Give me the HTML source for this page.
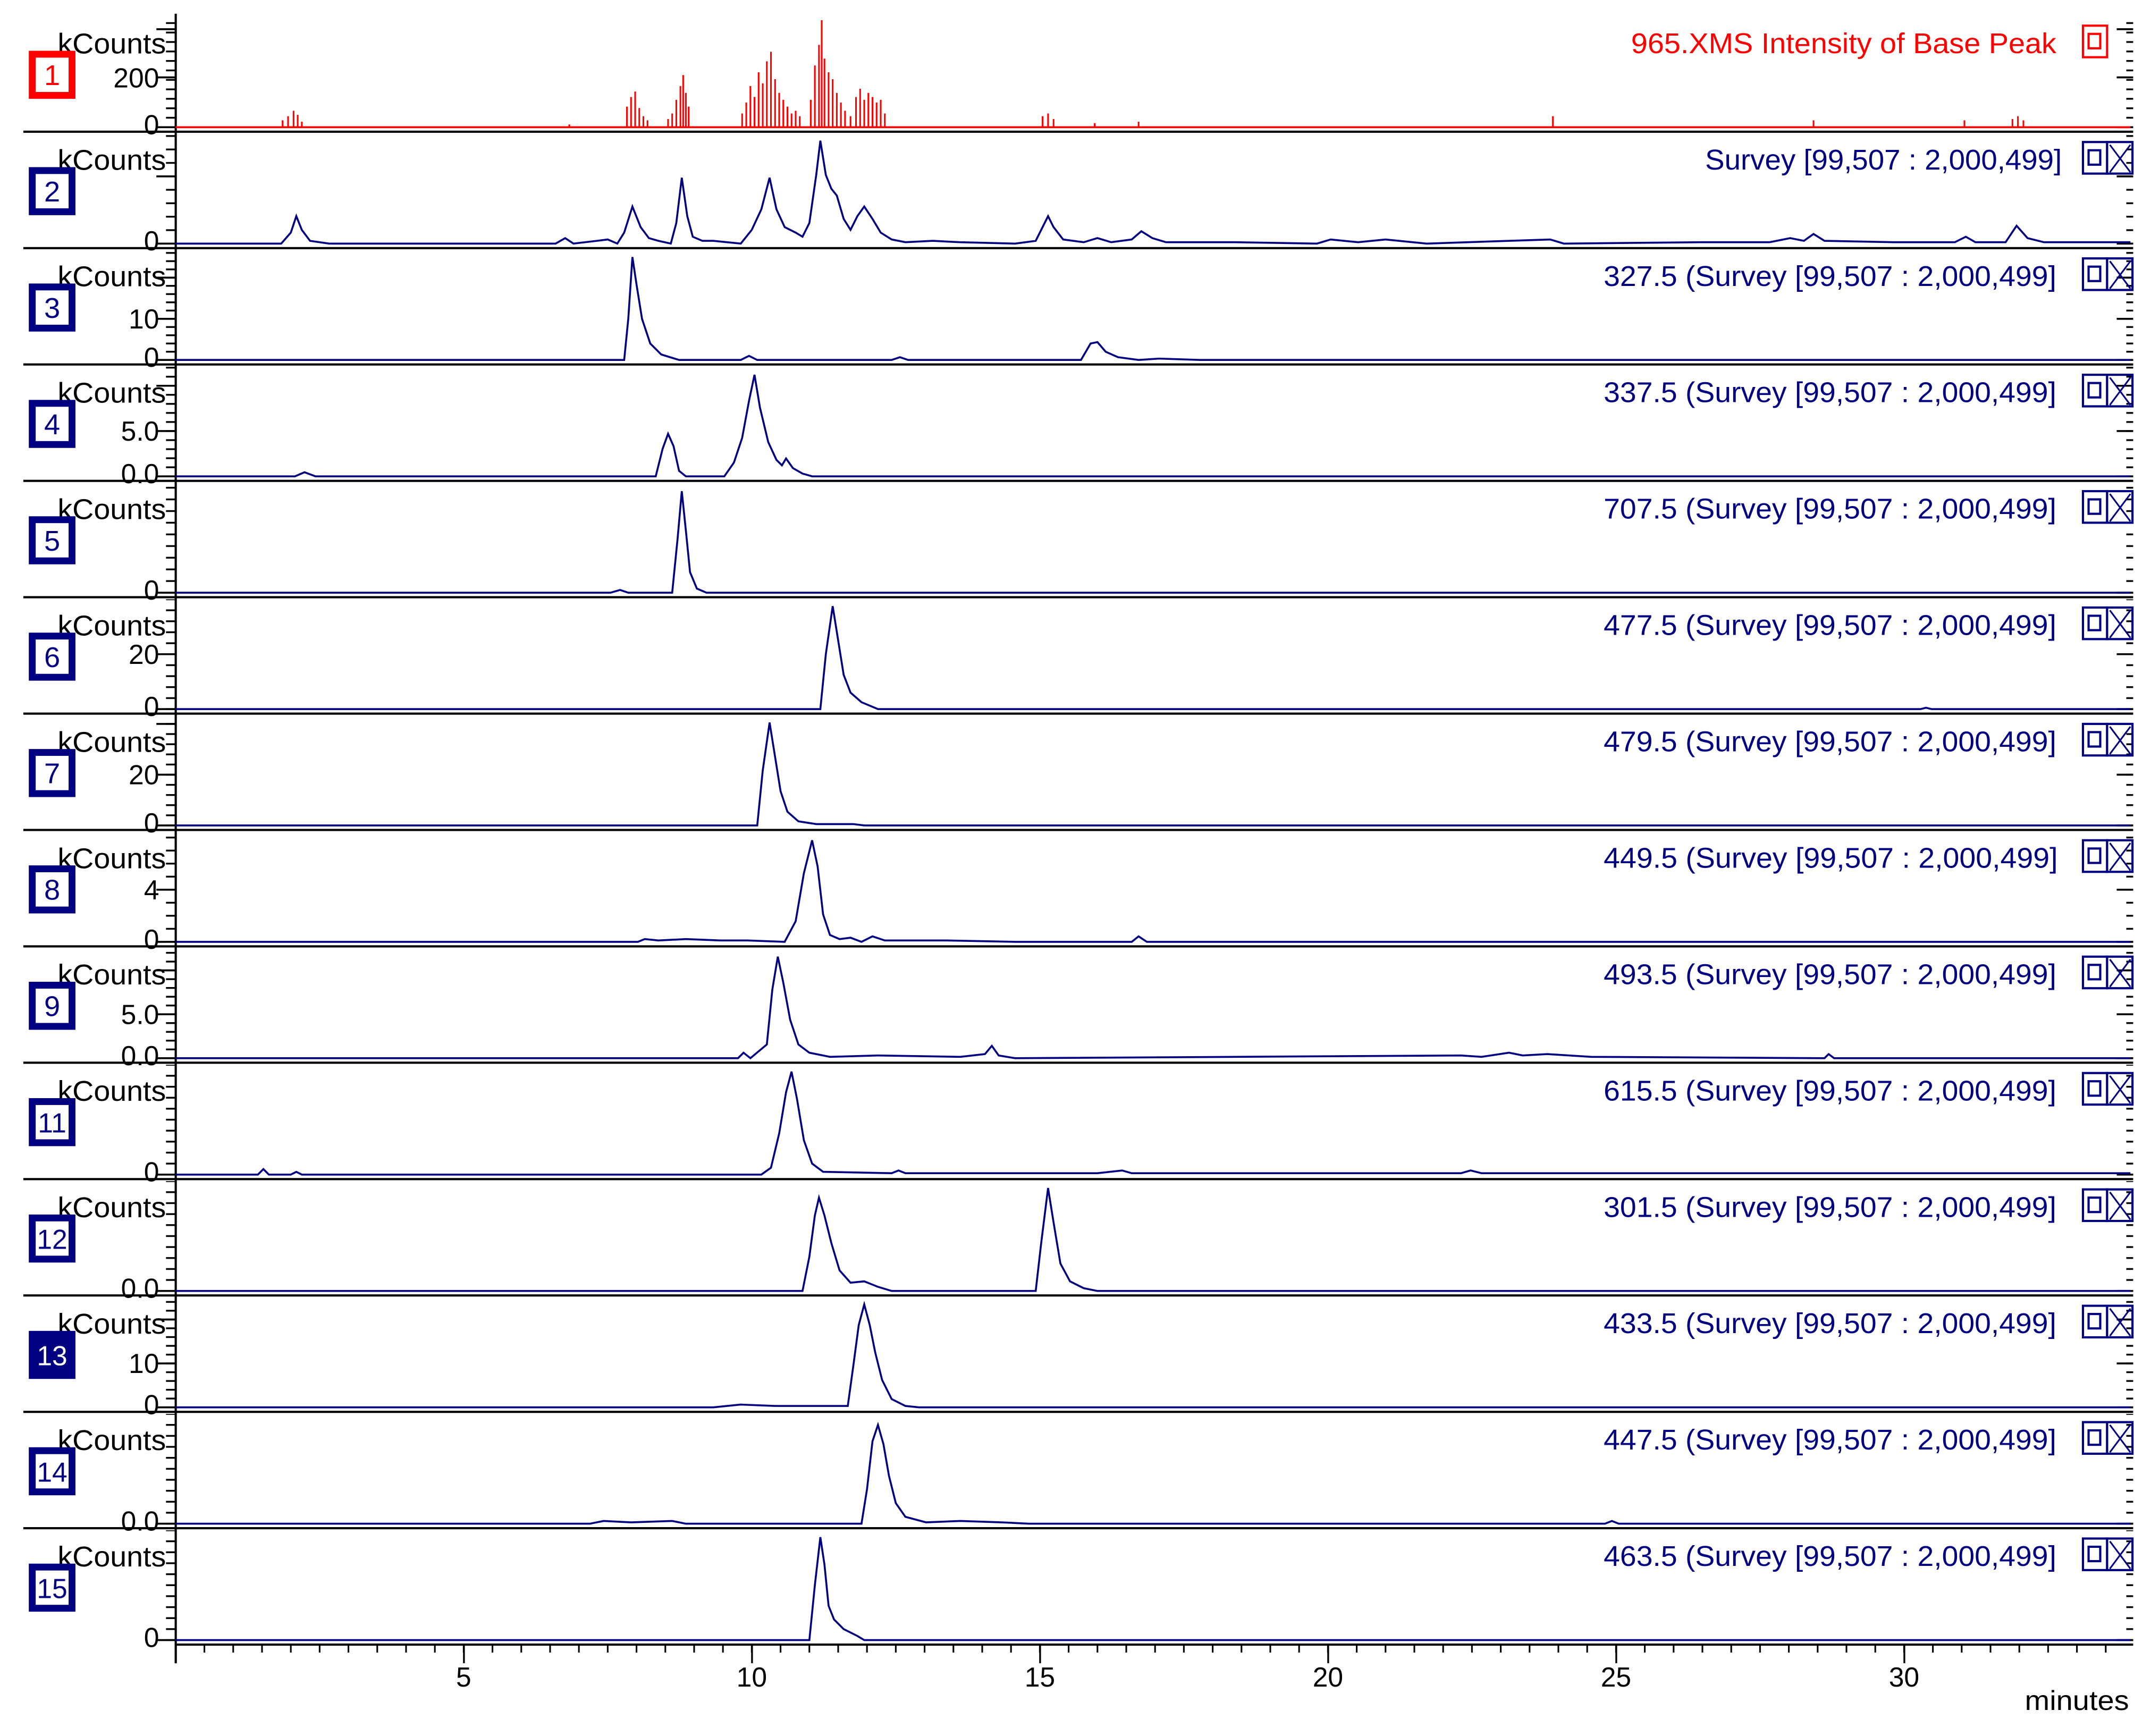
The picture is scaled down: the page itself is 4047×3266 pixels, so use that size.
<!DOCTYPE html>
<html><head><meta charset="utf-8"><style>html,body{margin:0;padding:0;background:#fff}svg{display:block}</style></head><body>
<svg xmlns="http://www.w3.org/2000/svg" width="4047" height="3266" viewBox="0 0 1568 1265" preserveAspectRatio="none" font-family="Liberation Sans, Arial, sans-serif">
<defs>
<pattern id="a" x="0" y="-0.65" width="7" height="6.9" patternUnits="userSpaceOnUse"><rect width="7" height="1.3"/></pattern>
<pattern id="b" x="0" y="-0.65" width="7" height="9.8" patternUnits="userSpaceOnUse"><rect width="7" height="1.3"/></pattern>
<pattern id="c" x="0" y="-0.65" width="7" height="6" patternUnits="userSpaceOnUse"><rect width="7" height="1.3"/></pattern>
<pattern id="d" x="0" y="-0.65" width="7" height="6.6" patternUnits="userSpaceOnUse"><rect width="7" height="1.3"/></pattern>
<pattern id="e" x="0" y="-0.65" width="7" height="8.5" patternUnits="userSpaceOnUse"><rect width="7" height="1.3"/></pattern>
<pattern id="f" x="0" y="-0.65" width="7" height="8" patternUnits="userSpaceOnUse"><rect width="7" height="1.3"/></pattern>
<pattern id="g" x="0" y="-0.65" width="7" height="7.4" patternUnits="userSpaceOnUse"><rect width="7" height="1.3"/></pattern>
<pattern id="h" x="0" y="-0.65" width="7" height="9.5" patternUnits="userSpaceOnUse"><rect width="7" height="1.3"/></pattern>
<pattern id="i" x="0" y="-0.65" width="7" height="6.4" patternUnits="userSpaceOnUse"><rect width="7" height="1.3"/></pattern>
<pattern id="xt" x="127.4" y="0" width="21" height="10" patternUnits="userSpaceOnUse"><rect width="1.2" height="10"/></pattern>
<g id="icon"><rect x="1518.4" y="-74" width="17.6" height="23" fill="none" stroke="#000080" stroke-width="1.6"/><rect x="1522.5" y="-68" width="8.5" height="10.5" fill="none" stroke="#000080" stroke-width="1.6"/><rect x="1536" y="-74" width="18.5" height="23" fill="none" stroke="#000080" stroke-width="1.6"/><path d="M1538 -72 L1553 -52 M1553 -72 L1538 -52" stroke="#000080" stroke-width="1.2"/></g>
</defs>
<rect width="1568" height="1265" fill="#fff"/>
<!-- y axis -->
<rect x="127.3" y="10" width="1.6" height="1202" fill="#000"/>

<!-- Panel 1 -->
<g transform="translate(0,92.7)">
<rect x="121" y="-82" width="7" height="82.65" fill="url(#a)"/><rect x="1550" y="-82" width="5" height="82.65" fill="url(#a)"/>
<path d="M114 0H128M114 -36.3H128M114 -71.4H128M1543 0H1555M1543 -36.3H1555M1543 -71.4H1555" stroke="#000" stroke-width="1.4"/>
<text x="116" y="-29" font-size="20" text-anchor="end">200</text><text x="116" y="5" font-size="20" text-anchor="end">0</text>
<text x="42" y="-53.7" font-size="21" textLength="79" lengthAdjust="spacingAndGlyphs">kCounts</text>
<rect x="23.5" y="-53.2" width="29" height="30" fill="#fff" stroke="#ff0000" stroke-width="5"/><text x="38" y="-30.7" font-size="21" text-anchor="middle" fill="#ff0000">1</text>
<text x="1189" y="-54" font-size="21" fill="#ff0000" textLength="310" lengthAdjust="spacingAndGlyphs">965.XMS Intensity of Base Peak</text>
<rect x="1518.4" y="-74" width="17.6" height="23" fill="none" stroke="#ff0000" stroke-width="1.6"/><rect x="1522.5" y="-68" width="8.5" height="10.5" fill="none" stroke="#ff0000" stroke-width="1.6"/>
<path d="M128 0H1553" stroke="#ff0000" stroke-width="1.4"/>
<path fill="none" stroke="#ff0000" stroke-width="1.2" d="M206 0V-5M210 0V-8M214 0V-12M217 0V-9M220 0V-4M415 0V-2M457 0V-15M460 0V-22M463 0V-26M466 0V-14M469 0V-8M472 0V-5M487 0V-6M490 0V-10M493 0V-20M496 0V-30M498 0V-38M500 0V-25M502 0V-15M541 0V-10M544 0V-18M547 0V-30M550 0V-22M553 0V-40M556 0V-32M559 0V-48M562 0V-55M565 0V-35M568 0V-25M571 0V-20M574 0V-15M577 0V-10M580 0V-12M583 0V-8M591 0V-20M594 0V-45M597 0V-60M599 0V-78M601 0V-50M604 0V-40M607 0V-35M610 0V-25M613 0V-18M616 0V-12M620 0V-8M624 0V-22M627 0V-28M630 0V-20M633 0V-25M636 0V-22M639 0V-18M642 0V-20M645 0V-10M760 0V-8M764 0V-10M768 0V-6M798 0V-3M830 0V-4M1132 0V-8M1322 0V-5M1432 0V-5M1467 0V-6M1471 0V-8M1475 0V-5"/>
<path d="M17 3.3H1555" stroke="#000" stroke-width="1.6"/>
</g>

<!-- Panel 2 -->
<g transform="translate(0,177.5)">
<rect x="121" y="-80" width="7" height="80.65" fill="url(#b)"/><rect x="1550" y="-80" width="5" height="80.65" fill="url(#b)"/>
<path d="M114 0H128M114 -49H128M1543 0H1555M1543 -49H1555" stroke="#000" stroke-width="1.4"/>
<text x="116" y="5" font-size="20" text-anchor="end">0</text>
<text x="42" y="-53.7" font-size="21" textLength="79" lengthAdjust="spacingAndGlyphs">kCounts</text>
<rect x="23.5" y="-53.2" width="29" height="30" fill="#fff" stroke="#000080" stroke-width="5"/><text x="38" y="-30.7" font-size="21" text-anchor="middle" fill="#000080">2</text>
<text x="1243" y="-54" font-size="21" fill="#000080" textLength="260" lengthAdjust="spacingAndGlyphs">Survey [99,507 : 2,000,499]</text>
<use href="#icon"/>
<path fill="none" stroke="#000080" stroke-width="1.4" d="M128,0 L205,0 L212,-8 L216,-20 L220,-10 L226,-2 L240,0 L405,0 L412,-4 L418,0 L435,-2 L443,-3 L450,0 L455,-8 L461,-27 L467,-12 L473,-4 L480,-2 L489,0 L493,-15 L497,-48 L501,-20 L505,-5 L512,-2 L520,-2 L530,-1 L540,0 L548,-10 L555,-25 L561,-48 L566,-25 L572,-12 L580,-8 L585,-5 L590,-15 L595,-50 L598,-75 L602,-50 L606,-40 L610,-35 L615,-18 L620,-10 L625,-20 L630,-27 L636,-18 L642,-8 L650,-3 L660,-1 L680,-2 L700,-1 L740,0 L755,-2 L760,-12 L764,-20 L768,-12 L775,-3 L790,-1 L800,-4 L810,-1 L825,-3 L832,-9 L840,-4 L850,-1 L900,-1 L960,0 L970,-3 L990,-1 L1010,-3 L1040,0 L1130,-3 L1140,0 L1240,-1 L1290,-1 L1305,-4 L1315,-2 L1322,-7 L1330,-2 L1380,-1 L1425,-1 L1433,-5 L1440,-1 L1462,-1 L1470,-13 L1478,-4 L1490,-1 L1553,-1"/>
<path d="M17 3.3H1555" stroke="#000" stroke-width="1.6"/>
</g>

<!-- Panel 3 -->
<g transform="translate(0,262.3)">
<rect x="121" y="-80" width="7" height="80.65" fill="url(#c)"/><rect x="1550" y="-80" width="5" height="80.65" fill="url(#c)"/>
<path d="M114 0H128M114 -30H128M114 -60H128M1543 0H1555M1543 -30H1555M1543 -60H1555" stroke="#000" stroke-width="1.4"/>
<text x="116" y="-23" font-size="20" text-anchor="end">10</text><text x="116" y="5" font-size="20" text-anchor="end">0</text>
<text x="42" y="-53.7" font-size="21" textLength="79" lengthAdjust="spacingAndGlyphs">kCounts</text>
<rect x="23.5" y="-53.2" width="29" height="30" fill="#fff" stroke="#000080" stroke-width="5"/><text x="38" y="-30.7" font-size="21" text-anchor="middle" fill="#000080">3</text>
<text x="1169" y="-54" font-size="21" fill="#000080" textLength="330" lengthAdjust="spacingAndGlyphs">327.5 (Survey [99,507 : 2,000,499]</text>
<use href="#icon"/>
<path fill="none" stroke="#000080" stroke-width="1.4" d="M128,0 L455,0 L458,-30 L461,-75 L464,-55 L468,-30 L474,-12 L482,-4 L495,0 L540,0 L546,-3 L552,0 L650,0 L656,-2 L662,0 L788,0 L795,-12 L800,-13 L806,-6 L815,-2 L830,0 L845,-1 L875,0 L1553,0"/>
<path d="M17 3.3H1555" stroke="#000" stroke-width="1.6"/>
</g>

<!-- Panel 4 -->
<g transform="translate(0,347.1)">
<rect x="121" y="-80" width="7" height="80.65" fill="url(#d)"/><rect x="1550" y="-80" width="5" height="80.65" fill="url(#d)"/>
<path d="M114 0H128M114 -33H128M114 -66H128M1543 0H1555M1543 -33H1555M1543 -66H1555" stroke="#000" stroke-width="1.4"/>
<text x="116" y="-26" font-size="20" text-anchor="end">5.0</text><text x="116" y="5" font-size="20" text-anchor="end">0.0</text>
<text x="42" y="-53.7" font-size="21" textLength="79" lengthAdjust="spacingAndGlyphs">kCounts</text>
<rect x="23.5" y="-53.2" width="29" height="30" fill="#fff" stroke="#000080" stroke-width="5"/><text x="38" y="-30.7" font-size="21" text-anchor="middle" fill="#000080">4</text>
<text x="1169" y="-54" font-size="21" fill="#000080" textLength="330" lengthAdjust="spacingAndGlyphs">337.5 (Survey [99,507 : 2,000,499]</text>
<use href="#icon"/>
<path fill="none" stroke="#000080" stroke-width="1.4" d="M128,0 L215,0 L222,-3 L230,0 L478,0 L483,-20 L487,-31 L491,-22 L495,-4 L500,0 L528,0 L535,-10 L541,-28 L546,-55 L550,-74 L554,-50 L560,-25 L566,-12 L570,-8 L573,-13 L578,-6 L585,-2 L592,0 L1553,0"/>
<path d="M17 3.3H1555" stroke="#000" stroke-width="1.6"/>
</g>

<!-- Panel 5 -->
<g transform="translate(0,431.9)">
<rect x="121" y="-80" width="7" height="80.65" fill="url(#e)"/><rect x="1550" y="-80" width="5" height="80.65" fill="url(#e)"/>
<path d="M114 0H128M1543 0H1555" stroke="#000" stroke-width="1.4"/>
<text x="116" y="5" font-size="20" text-anchor="end">0</text>
<text x="42" y="-53.7" font-size="21" textLength="79" lengthAdjust="spacingAndGlyphs">kCounts</text>
<rect x="23.5" y="-53.2" width="29" height="30" fill="#fff" stroke="#000080" stroke-width="5"/><text x="38" y="-30.7" font-size="21" text-anchor="middle" fill="#000080">5</text>
<text x="1169" y="-54" font-size="21" fill="#000080" textLength="330" lengthAdjust="spacingAndGlyphs">707.5 (Survey [99,507 : 2,000,499]</text>
<use href="#icon"/>
<path fill="none" stroke="#000080" stroke-width="1.4" d="M128,0 L445,0 L452,-2 L458,0 L490,0 L494,-40 L497,-74 L500,-45 L503,-15 L508,-3 L515,0 L1553,0"/>
<path d="M17 3.3H1555" stroke="#000" stroke-width="1.6"/>
</g>

<!-- Panel 6 -->
<g transform="translate(0,516.7)">
<rect x="121" y="-80" width="7" height="80.65" fill="url(#f)"/><rect x="1550" y="-80" width="5" height="80.65" fill="url(#f)"/>
<path d="M114 0H128M114 -40H128M1543 0H1555M1543 -40H1555" stroke="#000" stroke-width="1.4"/>
<text x="116" y="-33" font-size="20" text-anchor="end">20</text><text x="116" y="5" font-size="20" text-anchor="end">0</text>
<text x="42" y="-53.7" font-size="21" textLength="79" lengthAdjust="spacingAndGlyphs">kCounts</text>
<rect x="23.5" y="-53.2" width="29" height="30" fill="#fff" stroke="#000080" stroke-width="5"/><text x="38" y="-30.7" font-size="21" text-anchor="middle" fill="#000080">6</text>
<text x="1169" y="-54" font-size="21" fill="#000080" textLength="330" lengthAdjust="spacingAndGlyphs">477.5 (Survey [99,507 : 2,000,499]</text>
<use href="#icon"/>
<path fill="none" stroke="#000080" stroke-width="1.4" d="M128,0 L598,0 L602,-40 L607,-75 L611,-50 L615,-25 L620,-12 L628,-5 L640,0 L1400,0 L1404,-1 L1408,0 L1553,0"/>
<path d="M17 3.3H1555" stroke="#000" stroke-width="1.6"/>
</g>

<!-- Panel 7 -->
<g transform="translate(0,601.5)">
<rect x="121" y="-80" width="7" height="80.65" fill="url(#g)"/><rect x="1550" y="-80" width="5" height="80.65" fill="url(#g)"/>
<path d="M114 0H128M114 -37H128M114 -74H128M1543 0H1555M1543 -37H1555M1543 -74H1555" stroke="#000" stroke-width="1.4"/>
<text x="116" y="-30" font-size="20" text-anchor="end">20</text><text x="116" y="5" font-size="20" text-anchor="end">0</text>
<text x="42" y="-53.7" font-size="21" textLength="79" lengthAdjust="spacingAndGlyphs">kCounts</text>
<rect x="23.5" y="-53.2" width="29" height="30" fill="#fff" stroke="#000080" stroke-width="5"/><text x="38" y="-30.7" font-size="21" text-anchor="middle" fill="#000080">7</text>
<text x="1169" y="-54" font-size="21" fill="#000080" textLength="330" lengthAdjust="spacingAndGlyphs">479.5 (Survey [99,507 : 2,000,499]</text>
<use href="#icon"/>
<path fill="none" stroke="#000080" stroke-width="1.4" d="M128,0 L552,0 L556,-40 L561,-75 L565,-50 L569,-25 L574,-10 L582,-3 L595,-1 L622,-1 L630,0 L1553,0"/>
<path d="M17 3.3H1555" stroke="#000" stroke-width="1.6"/>
</g>

<!-- Panel 8 -->
<g transform="translate(0,686.3)">
<rect x="121" y="-80" width="7" height="80.65" fill="url(#h)"/><rect x="1550" y="-80" width="5" height="80.65" fill="url(#h)"/>
<path d="M114 0H128M114 -38H128M1543 0H1555M1543 -38H1555" stroke="#000" stroke-width="1.4"/>
<text x="116" y="-31" font-size="20" text-anchor="end">4</text><text x="116" y="5" font-size="20" text-anchor="end">0</text>
<text x="42" y="-53.7" font-size="21" textLength="79" lengthAdjust="spacingAndGlyphs">kCounts</text>
<rect x="23.5" y="-53.2" width="29" height="30" fill="#fff" stroke="#000080" stroke-width="5"/><text x="38" y="-30.7" font-size="21" text-anchor="middle" fill="#000080">8</text>
<text x="1169" y="-54" font-size="21" fill="#000080" textLength="331" lengthAdjust="spacingAndGlyphs">449.5 (Survey [99,507 : 2,000,499]</text>
<use href="#icon"/>
<path fill="none" stroke="#000080" stroke-width="1.4" d="M128,0 L465,0 L470,-2 L480,-1 L500,-2 L525,-1 L545,-1 L572,0 L580,-15 L586,-50 L592,-74 L596,-55 L600,-20 L605,-5 L612,-2 L620,-3 L628,0 L636,-4 L645,-1 L690,-1 L740,0 L825,0 L830,-4 L836,0 L1553,0"/>
<path d="M17 3.3H1555" stroke="#000" stroke-width="1.6"/>
</g>

<!-- Panel 9 -->
<g transform="translate(0,771.1)">
<rect x="121" y="-80" width="7" height="80.65" fill="url(#i)"/><rect x="1550" y="-80" width="5" height="80.65" fill="url(#i)"/>
<path d="M114 0H128M114 -32H128M114 -64H128M1543 0H1555M1543 -32H1555M1543 -64H1555" stroke="#000" stroke-width="1.4"/>
<text x="116" y="-25" font-size="20" text-anchor="end">5.0</text><text x="116" y="5" font-size="20" text-anchor="end">0.0</text>
<text x="42" y="-53.7" font-size="21" textLength="79" lengthAdjust="spacingAndGlyphs">kCounts</text>
<rect x="23.5" y="-53.2" width="29" height="30" fill="#fff" stroke="#000080" stroke-width="5"/><text x="38" y="-30.7" font-size="21" text-anchor="middle" fill="#000080">9</text>
<text x="1169" y="-54" font-size="21" fill="#000080" textLength="330" lengthAdjust="spacingAndGlyphs">493.5 (Survey [99,507 : 2,000,499]</text>
<use href="#icon"/>
<path fill="none" stroke="#000080" stroke-width="1.4" d="M128,0 L538,0 L542,-4 L547,0 L559,-10 L563,-50 L567,-74 L571,-55 L576,-28 L582,-10 L590,-4 L605,-1 L640,-2 L700,-1 L718,-3 L723,-9 L728,-2 L740,0 L1065,-2 L1080,-1 L1100,-4 L1110,-2 L1128,-3 L1160,-1 L1330,0 L1333,-3 L1337,0 L1553,0"/>
<path d="M17 3.3H1555" stroke="#000" stroke-width="1.6"/>
</g>

<!-- Panel 11 -->
<g transform="translate(0,855.9)">
<rect x="121" y="-80" width="7" height="80.65" fill="url(#f)"/><rect x="1550" y="-80" width="5" height="80.65" fill="url(#f)"/>
<path d="M114 0H128M1543 0H1555" stroke="#000" stroke-width="1.4"/>
<text x="116" y="5" font-size="20" text-anchor="end">0</text>
<text x="42" y="-53.7" font-size="21" textLength="79" lengthAdjust="spacingAndGlyphs">kCounts</text>
<rect x="23.5" y="-53.2" width="29" height="30" fill="#fff" stroke="#000080" stroke-width="5"/><text x="38" y="-30.7" font-size="20" text-anchor="middle" fill="#000080">11</text>
<text x="1169" y="-54" font-size="21" fill="#000080" textLength="330" lengthAdjust="spacingAndGlyphs">615.5 (Survey [99,507 : 2,000,499]</text>
<use href="#icon"/>
<path fill="none" stroke="#000080" stroke-width="1.4" d="M128,0 L188,0 L192,-4 L196,0 L212,0 L216,-2 L220,0 L555,0 L562,-5 L568,-30 L573,-60 L577,-75 L581,-55 L586,-25 L592,-8 L600,-2 L650,-1 L655,-3 L660,-1 L800,-1 L818,-3 L825,-1 L1065,-1 L1072,-3 L1080,-1 L1553,-1"/>
<path d="M17 3.3H1555" stroke="#000" stroke-width="1.6"/>
</g>

<!-- Panel 12 -->
<g transform="translate(0,940.7)">
<rect x="121" y="-80" width="7" height="80.65" fill="url(#f)"/><rect x="1550" y="-80" width="5" height="80.65" fill="url(#f)"/>
<path d="M114 0H128M1543 0H1555" stroke="#000" stroke-width="1.4"/>
<text x="116" y="5" font-size="20" text-anchor="end">0.0</text>
<text x="42" y="-53.7" font-size="21" textLength="79" lengthAdjust="spacingAndGlyphs">kCounts</text>
<rect x="23.5" y="-53.2" width="29" height="30" fill="#fff" stroke="#000080" stroke-width="5"/><text x="38" y="-30.7" font-size="20" text-anchor="middle" fill="#000080">12</text>
<text x="1169" y="-54" font-size="21" fill="#000080" textLength="330" lengthAdjust="spacingAndGlyphs">301.5 (Survey [99,507 : 2,000,499]</text>
<use href="#icon"/>
<path fill="none" stroke="#000080" stroke-width="1.4" d="M128,0 L585,0 L590,-25 L594,-55 L597,-68 L601,-55 L606,-35 L612,-15 L620,-6 L630,-7 L640,-3 L650,0 L755,0 L759,-35 L764,-75 L768,-50 L773,-20 L780,-7 L790,-2 L800,0 L1553,0"/>
<path d="M17 3.3H1555" stroke="#000" stroke-width="1.6"/>
</g>

<!-- Panel 13 -->
<g transform="translate(0,1025.5)">
<rect x="121" y="-80" width="7" height="80.65" fill="url(#i)"/><rect x="1550" y="-80" width="5" height="80.65" fill="url(#i)"/>
<path d="M114 0H128M114 -32H128M114 -64H128M1543 0H1555M1543 -32H1555M1543 -64H1555" stroke="#000" stroke-width="1.4"/>
<text x="116" y="-25" font-size="20" text-anchor="end">10</text><text x="116" y="5" font-size="20" text-anchor="end">0</text>
<text x="42" y="-53.7" font-size="21" textLength="79" lengthAdjust="spacingAndGlyphs">kCounts</text>
<rect x="23.5" y="-53.2" width="29" height="30" fill="#000080" stroke="#000080" stroke-width="5"/><text x="38" y="-30.7" font-size="20" text-anchor="middle" fill="#fff">13</text>
<text x="1169" y="-54" font-size="21" fill="#000080" textLength="330" lengthAdjust="spacingAndGlyphs">433.5 (Survey [99,507 : 2,000,499]</text>
<use href="#icon"/>
<path fill="none" stroke="#000080" stroke-width="1.4" d="M128,0 L520,0 L540,-2 L565,-1 L618,-1 L622,-30 L626,-60 L630,-75 L634,-60 L638,-40 L643,-20 L650,-6 L660,-1 L670,0 L1553,0"/>
<path d="M17 3.3H1555" stroke="#000" stroke-width="1.6"/>
</g>

<!-- Panel 14 -->
<g transform="translate(0,1110.3)">
<rect x="121" y="-80" width="7" height="80.65" fill="url(#f)"/><rect x="1550" y="-80" width="5" height="80.65" fill="url(#f)"/>
<path d="M114 0H128M1543 0H1555" stroke="#000" stroke-width="1.4"/>
<text x="116" y="5" font-size="20" text-anchor="end">0.0</text>
<text x="42" y="-53.7" font-size="21" textLength="79" lengthAdjust="spacingAndGlyphs">kCounts</text>
<rect x="23.5" y="-53.2" width="29" height="30" fill="#fff" stroke="#000080" stroke-width="5"/><text x="38" y="-30.7" font-size="20" text-anchor="middle" fill="#000080">14</text>
<text x="1169" y="-54" font-size="21" fill="#000080" textLength="330" lengthAdjust="spacingAndGlyphs">447.5 (Survey [99,507 : 2,000,499]</text>
<use href="#icon"/>
<path fill="none" stroke="#000080" stroke-width="1.4" d="M128,0 L430,0 L440,-2 L460,-1 L490,-2 L500,0 L628,0 L632,-25 L636,-60 L640,-72 L644,-58 L648,-35 L653,-15 L660,-5 L675,-1 L700,-2 L730,-1 L750,0 L1170,0 L1175,-2 L1180,0 L1553,0"/>
<path d="M17 3.3H1555" stroke="#000" stroke-width="1.6"/>
</g>

<!-- Panel 15 -->
<g transform="translate(0,1195.1)">
<rect x="121" y="-80" width="7" height="80.65" fill="url(#f)"/><rect x="1550" y="-80" width="5" height="80.65" fill="url(#f)"/>
<path d="M114 0H128M1543 0H1555" stroke="#000" stroke-width="1.4"/>
<text x="116" y="5" font-size="20" text-anchor="end">0</text>
<text x="42" y="-53.7" font-size="21" textLength="79" lengthAdjust="spacingAndGlyphs">kCounts</text>
<rect x="23.5" y="-53.2" width="29" height="30" fill="#fff" stroke="#000080" stroke-width="5"/><text x="38" y="-30.7" font-size="20" text-anchor="middle" fill="#000080">15</text>
<text x="1169" y="-54" font-size="21" fill="#000080" textLength="330" lengthAdjust="spacingAndGlyphs">463.5 (Survey [99,507 : 2,000,499]</text>
<use href="#icon"/>
<path fill="none" stroke="#000080" stroke-width="1.4" d="M128,0 L590,0 L594,-40 L598,-75 L601,-55 L604,-25 L608,-15 L615,-8 L625,-3 L630,0 L1553,0"/>
<path d="M128 3.3H1555" stroke="#000" stroke-width="1.6"/>
</g>

<!-- x axis ticks -->
<rect x="127.4" y="1198.4" width="1426" height="5.8" fill="url(#xt)"/>
<path d="M128.2 1198V1212M338.2 1198V1212M548.2 1198V1212M758.2 1198V1212M968.2 1198V1212M1178.2 1198V1212M1388.2 1198V1212" stroke="#000" stroke-width="1.3"/>
<g font-size="20" text-anchor="middle">
<text x="338" y="1229">5</text><text x="548" y="1229">10</text><text x="758" y="1229">15</text><text x="968" y="1229">20</text><text x="1178" y="1229">25</text><text x="1388" y="1229">30</text>
</g>
<text x="1476" y="1246" font-size="20" textLength="76" lengthAdjust="spacingAndGlyphs">minutes</text>
</svg>
</body></html>
